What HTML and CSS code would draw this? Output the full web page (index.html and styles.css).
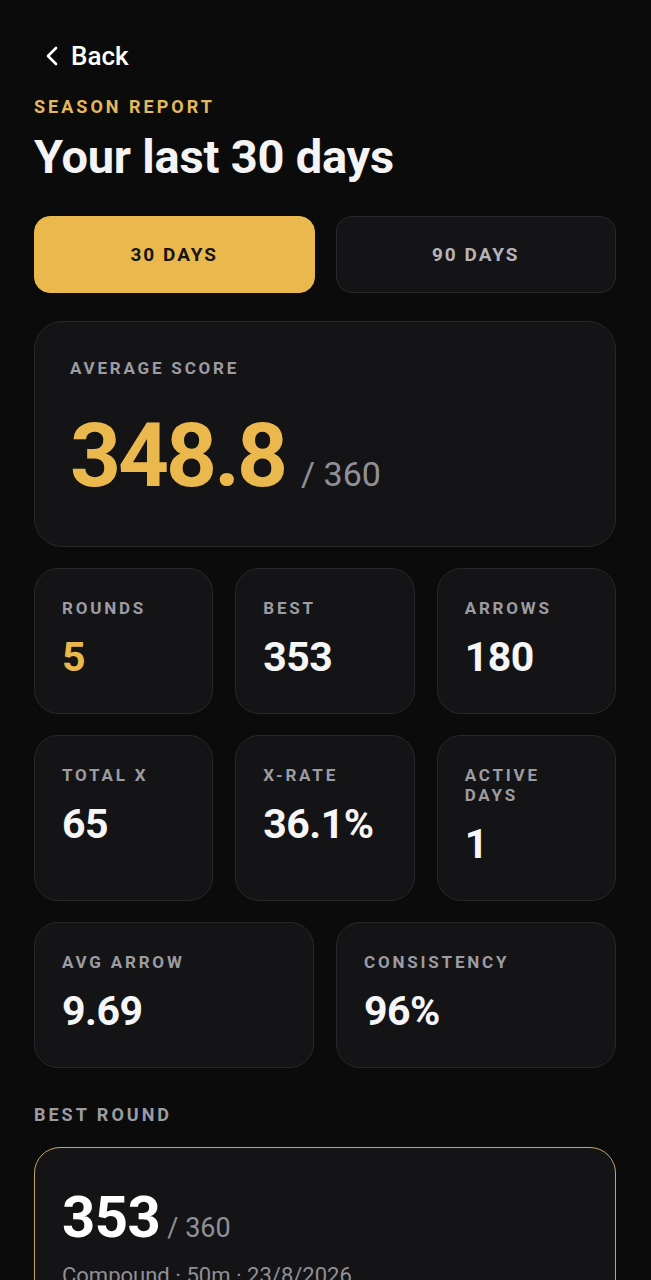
FILE: index.html
```html
<!DOCTYPE html>
<html lang="en">

<head>
    <meta charset="UTF-8">
    <meta name="viewport" content="width=device-width, initial-scale=1.0">
    <title>Season report</title>
    <link rel="stylesheet" href="styles.css">
</head>

<body>
    <div class="page">
        <a class="back" href="#">
            <svg width="14" height="20" viewBox="0 0 14 20"><path d="M11 2 L3 10 L11 18" fill="none" stroke="#fff" stroke-width="2.6" stroke-linecap="round" stroke-linejoin="round"/></svg>
            <span>Back</span>
        </a>

        <p class="eyebrow">SEASON REPORT</p>
        <h1 class="title">Your last 30 days</h1>

        <div class="tabs">
            <button class="tab active">30 DAYS</button>
            <button class="tab">90 DAYS</button>
        </div>

        <!-- average -->
        <div class="card hero">
            <p class="label">AVERAGE SCORE</p>
            <div class="hero-value">
                <span class="big">348.8</span>
                <span class="out">/ 360</span>
            </div>
        </div>

        <div class="grid three">
            <div class="card stat">
                <p class="label">ROUNDS</p>
                <p class="value gold">5</p>
            </div>
            <div class="card stat">
                <p class="label">BEST</p>
                <p class="value">353</p>
            </div>
            <div class="card stat">
                <p class="label">ARROWS</p>
                <p class="value">180</p>
            </div>
        </div>

        <div class="grid three">
            <div class="card stat">
                <p class="label">TOTAL X</p>
                <p class="value">65</p>
            </div>
            <div class="card stat">
                <p class="label">X-RATE</p>
                <p class="value">36.1%</p>
            </div>
            <div class="card stat">
                <p class="label">ACTIVE DAYS</p>
                <p class="value">1</p>
            </div>
        </div>

        <div class="grid two">
            <div class="card stat">
                <p class="label">AVG ARROW</p>
                <p class="value">9.69</p>
            </div>
            <div class="card stat">
                <p class="label">CONSISTENCY</p>
                <p class="value">96%</p>
            </div>
        </div>

        <!-- best round -->
        <p class="section">BEST ROUND</p>
        <div class="card best">
            <div class="best-value">
                <span class="big">353</span>
                <span class="out">/ 360</span>
            </div>
            <p class="meta">Compound · 50m · 23/8/2026</p>
        </div>
    </div>
</body>

</html>
```

FILE: styles.css
```css
* {
    box-sizing: border-box;
}

body {
    margin: 0;
    background: #0b0b0c;
    color: #fff;
    font-family: Roboto, "Liberation Sans", sans-serif;
}

p, h1 {
    margin: 0;
}

.page {
    padding: 41px 35px 0 34px;
    height: 1280px;
    overflow: hidden;
}

.back {
    display: flex;
    align-items: center;
    gap: 12px;
    color: #fff;
    text-decoration: none;
    font-size: 26px;
    font-weight: 500;
    line-height: 30px;
    margin-left: 11px;
}

.eyebrow {
    margin-top: 25px;
    color: #e2b85e;
    font-size: 18px;
    font-weight: 700;
    letter-spacing: 3px;
}

.title {
    margin-top: 12px;
    font-size: 47px;
    font-weight: 700;
    letter-spacing: -0.2px;
    color: #f4f4f5;
}

/* tabs */
.tabs {
    display: flex;
    gap: 21px;
    margin-top: 32px;
}

.tab {
    flex: 1;
    height: 77px;
    border-radius: 16px;
    border: 1px solid #2a2a2d;
    background: #141416;
    color: #b4b4ba;
    font-family: inherit;
    font-size: 19px;
    font-weight: 700;
    letter-spacing: 2px;
}

.tab.active {
    background: #ebb84e;
    border-color: #ebb84e;
    color: #151515;
}

/* cards */
.card {
    background: #141416;
    border: 1px solid #28282b;
    border-radius: 24px;
}

.label {
    color: #9c9ca2;
    font-size: 17px;
    font-weight: 700;
    letter-spacing: 2.8px;
    line-height: 20px;
}

.hero {
    margin-top: 28px;
    padding: 36px 35px 0;
    height: 226px;
    border-radius: 28px;
}

.hero-value {
    display: flex;
    align-items: baseline;
    margin-top: 25px;
}

.hero-value .big {
    color: #ebb84e;
    font-size: 89px;
    font-weight: 700;
    letter-spacing: -3px;
}

.hero-value .out {
    margin-left: 16px;
    color: #909097;
    font-size: 34px;
}

.grid {
    display: grid;
    gap: 22px;
    margin-top: 21px;
}

.three {
    grid-template-columns: repeat(3, 1fr);
}

.two {
    grid-template-columns: repeat(2, 1fr);
}

.stat {
    padding: 29px 27px 32px;
}

.value {
    margin-top: 15px;
    font-size: 41px;
    font-weight: 700;
    letter-spacing: -0.5px;
    color: #f6f6f7;
}

.gold {
    color: #ebb84e;
}

.section {
    margin-top: 36px;
    color: #9c9ca2;
    font-size: 18px;
    font-weight: 700;
    letter-spacing: 3px;
}

.best {
    margin-top: 22px;
    border: 1.5px solid #c9a465;
    border-radius: 26px;
    padding: 35px 27px 40px;
}

.best-value {
    display: flex;
    align-items: baseline;
}

.best-value .big {
    font-size: 58px;
    font-weight: 700;
    letter-spacing: -0.5px;
    color: #fff;
}

.best-value .out {
    margin-left: 7px;
    color: #909097;
    font-size: 27px;
}

.meta {
    margin-top: 12px;
    color: #909097;
    font-size: 22px;
}
```
